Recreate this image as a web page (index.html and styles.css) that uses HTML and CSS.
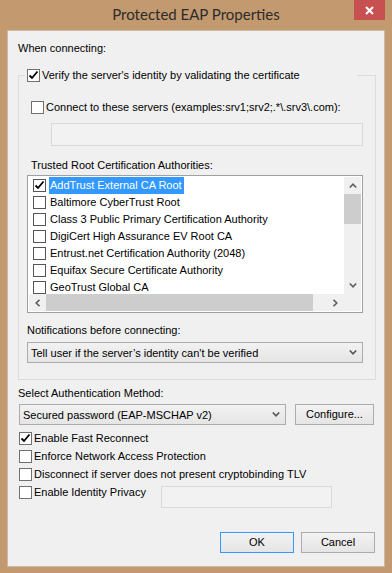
FILE: index.html
```html
<!DOCTYPE html>
<html lang="en">
<head>
<meta charset="UTF-8">
<meta name="viewport" content="width=device-width, initial-scale=1.0">
<title>Protected EAP Properties</title>
<link rel="stylesheet" href="styles.css">
</head>
<body>

<div class="window">
  <div class="titlebar">
    <div class="title">Protected EAP Properties</div>
    <div class="close">
      <svg width="9" height="9" viewBox="0 0 9 9"><path d="M1 1 L8 8 M8 1 L1 8" stroke="#fff" stroke-width="2"/></svg>
    </div>
  </div>

  <div class="client">
    <div class="label">When connecting:</div>

    <fieldset class="group">
      <legend class="group-head">
        <span class="box"><svg width="11" height="11" viewBox="0 0 11 11"><path d="M1.5 5.5 L4 8 L9.5 1.5" fill="none" stroke="#000" stroke-width="1.8"/></svg></span>
        <span class="text">Verify the server's identity by validating the certificate</span>
      </legend>

      <div class="check connect">
        <span class="box"></span>
        <span class="text">Connect to these servers (examples:srv1;srv2;.*\.srv3\.com):</span>
      </div>
      <div class="textbox servers"></div>

      <div class="label trusted">Trusted Root Certification Authorities:</div>
      <div class="listbox">
        <div class="list-rows">
          <div class="list-item">
            <span class="box dark"><svg width="11" height="11" viewBox="0 0 11 11"><path d="M1.5 5.5 L4 8 L9.5 1.5" fill="none" stroke="#000" stroke-width="1.8"/></svg></span>
            <span class="item-text selected">AddTrust External CA Root</span>
          </div>
          <div class="list-item"><span class="box dark"></span><span class="item-text">Baltimore CyberTrust Root</span></div>
          <div class="list-item"><span class="box dark"></span><span class="item-text">Class 3 Public Primary Certification Authority</span></div>
          <div class="list-item"><span class="box dark"></span><span class="item-text">DigiCert High Assurance EV Root CA</span></div>
          <div class="list-item"><span class="box dark"></span><span class="item-text">Entrust.net Certification Authority (2048)</span></div>
          <div class="list-item"><span class="box dark"></span><span class="item-text">Equifax Secure Certificate Authority</span></div>
          <div class="list-item"><span class="box dark"></span><span class="item-text">GeoTrust Global CA</span></div>
        </div>
        <div class="vscroll">
          <div class="arrow"><svg width="8" height="5" viewBox="0 0 8 5"><path d="M0.8 4.5 L4 1.2 L7.2 4.5" fill="none" stroke="#606060" stroke-width="1.6"/></svg></div>
          <div class="track"><div class="thumb"></div></div>
          <div class="arrow"><svg width="8" height="5" viewBox="0 0 8 5"><path d="M0.8 0.5 L4 3.8 L7.2 0.5" fill="none" stroke="#606060" stroke-width="1.6"/></svg></div>
        </div>
        <div class="hscroll">
          <div class="arrow"><svg width="5" height="8" viewBox="0 0 5 8"><path d="M4.5 0.8 L1.2 4 L4.5 7.2" fill="none" stroke="#606060" stroke-width="1.6"/></svg></div>
          <div class="track"><div class="thumb"></div></div>
          <div class="arrow"><svg width="5" height="8" viewBox="0 0 5 8"><path d="M0.5 0.8 L3.8 4 L0.5 7.2" fill="none" stroke="#606060" stroke-width="1.6"/></svg></div>
        </div>
        <div class="corner"></div>
      </div>

      <div class="label notify">Notifications before connecting:</div>
      <div class="combo notify-combo">
        <span>Tell user if the server’s identity can't be verified</span>
        <svg width="8" height="5" viewBox="0 0 8 5"><path d="M0.8 0.5 L4 3.8 L7.2 0.5" fill="none" stroke="#555" stroke-width="1.6"/></svg>
      </div>
    </fieldset>

    <div class="label auth-label">Select Authentication Method:</div>
    <div class="auth-row">
      <div class="combo auth-combo">
        <span>Secured password (EAP-MSCHAP v2)</span>
        <svg width="8" height="5" viewBox="0 0 8 5"><path d="M0.8 0.5 L4 3.8 L7.2 0.5" fill="none" stroke="#555" stroke-width="1.6"/></svg>
      </div>
      <div class="button configure">Configure...</div>
    </div>

    <div class="options">
      <div class="check option">
        <span class="box"><svg width="11" height="11" viewBox="0 0 11 11"><path d="M1.5 5.5 L4 8 L9.5 1.5" fill="none" stroke="#000" stroke-width="1.8"/></svg></span>
        <span class="text">Enable Fast Reconnect</span>
      </div>
      <div class="check option"><span class="box"></span><span class="text">Enforce Network Access Protection</span></div>
      <div class="check option"><span class="box"></span><span class="text">Disconnect if server does not present cryptobinding TLV</span></div>
      <div class="identity-row">
        <div class="check option identity"><span class="box"></span><span class="text">Enable Identity Privacy</span></div>
        <div class="textbox identity-box"></div>
      </div>
    </div>

    <div class="buttons">
      <div class="button default">OK</div>
      <div class="button">Cancel</div>
    </div>
  </div>
</div>

</body>
</html>
```

FILE: styles.css
```css
* {
  box-sizing: border-box;
}
body {
  margin: 0;
  background: #c3996f;
  font-family: "Liberation Sans", Arial, sans-serif;
  font-size: 11px;
  color: #000;
}
.window {
  width: 392px;
  height: 573px;
}

/* title bar */
.titlebar {
  height: 30px;
  display: grid;
  grid-template-columns: 1fr auto 1fr;
}
.title {
  grid-column: 2;
  font-family: Lato, "Liberation Sans", sans-serif;
  font-size: 15px;
  line-height: 20px;
  padding-top: 4px;
  color: #2b2b2b;
}
.close {
  grid-column: 3;
  justify-self: end;
  width: 31px;
  height: 20px;
  margin-right: 7px;
  background: #c75050;
  display: flex;
  align-items: center;
  justify-content: center;
}

/* client area */
.client {
  margin: 0 7px 6px;
  height: 537px;
  background: #f0f0f0;
  border: 1px solid #cbb9a6;
  padding: 9px 8px 0 10px;
}
.label {
  height: 16px;
  line-height: 16px;
  white-space: nowrap;
}

.group {
  margin: 10px 0 0;
  padding: 0 12px 16px 8px;
  border: 1px solid #dcdcdc;
  min-width: 0;
}
.group-head {
  margin-left: -2px;
  padding: 0 0 0 2px;
  width: 332px;
  height: 18px;
  display: flex;
  align-items: center;
  white-space: nowrap;
}
.group-head .text {
  margin-left: 2px;
}

.box {
  flex: none;
  width: 13px;
  height: 13px;
  border: 1px solid #707070;
  background: #fff;
  display: flex;
  align-items: center;
  justify-content: center;
}
.box.dark {
  border-color: #555;
}
.check {
  display: flex;
  align-items: center;
  white-space: nowrap;
}
.check .text {
  margin-left: 2px;
}
.connect {
  height: 16px;
  margin-top: 15px;
  padding-left: 4px;
}

.textbox {
  border: 1px solid #d9d9d9;
  background: #f2f2f2;
}
.servers {
  margin: 8px 0 0 24px;
  width: 312px;
  height: 23px;
}
.trusted {
  margin-top: 11px;
  padding-left: 4px;
}

/* list with check boxes */
.listbox {
  margin-top: 2px;
  width: 336px;
  height: 138px;
  border: 1px solid #a0a0a0;
  background: #fff;
  padding: 1px;
  display: grid;
  grid-template-columns: 1fr 17px;
  grid-template-rows: 1fr 17px;
}
.list-rows {
  overflow: hidden;
}
.list-item {
  height: 17px;
  display: flex;
  align-items: center;
  padding-left: 4px;
  white-space: nowrap;
}
.item-text {
  margin-left: 3px;
  padding: 0 2px 0 1px;
  line-height: 17px;
}
.item-text.selected {
  background: #3399ff;
  color: #fff;
}
.vscroll,
.hscroll,
.corner {
  background: #f0f0f0;
}
.vscroll {
  display: flex;
  flex-direction: column;
}
.hscroll {
  display: flex;
}
.arrow {
  flex: none;
  width: 17px;
  height: 17px;
  display: flex;
  align-items: center;
  justify-content: center;
}
.track {
  flex: 1;
}
.vscroll .thumb {
  height: 30px;
  background: #cdcdcd;
}
.hscroll .thumb {
  width: 267px;
  height: 17px;
  background: #cdcdcd;
}

.notify {
  margin-top: 9px;
}
.combo {
  height: 21px;
  border: 1px solid #acacac;
  background: linear-gradient(#f2f2f2, #e5e5e5);
  display: flex;
  align-items: center;
  justify-content: space-between;
  padding: 0 5px 0 3px;
  white-space: nowrap;
}
.notify-combo {
  margin-top: 4px;
  width: 336px;
}

/* bottom section */
.auth-label {
  margin-top: 5px;
}
.auth-row {
  display: flex;
  gap: 9px;
  margin: 3px 0 0 1px;
}
.auth-combo {
  width: 267px;
}
.button {
  height: 21px;
  border: 1px solid #acacac;
  background: linear-gradient(#f2f2f2, #e5e5e5);
  text-align: center;
  line-height: 19px;
}
.configure {
  width: 79px;
}
.options {
  margin-top: 4px;
}
.option {
  height: 18px;
  padding-left: 1px;
}
.identity-row {
  display: flex;
  align-items: flex-start;
}
.identity {
  width: 143px;
}
.identity-box {
  margin-top: 3px;
  width: 171px;
  height: 22px;
}
.buttons {
  display: flex;
  justify-content: flex-end;
  gap: 7px;
  margin: 24px 1px 0 0;
}
.buttons .button {
  width: 74px;
}
.button.default {
  border-color: #3399ff;
}
```
